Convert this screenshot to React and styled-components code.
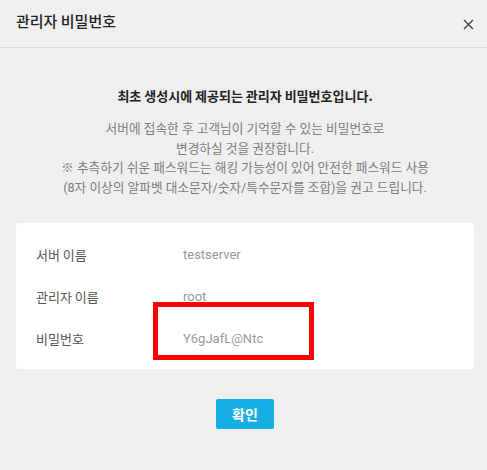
import React from 'react';
import styled, { createGlobalStyle } from 'styled-components';

const GlobalStyle = createGlobalStyle`
  html, body {
    margin: 0;
    padding: 0;
    background: #efefef;
    overflow: hidden;
  }
  body {
    font-family: Roboto, 'Noto Sans CJK KR', sans-serif;
  }
`;

const rows = [
  { label: '서버 이름', value: 'testserver' },
  { label: '관리자 이름', value: 'root' },
  { label: '비밀번호', value: 'Y6gJafL@Ntc', marked: true },
];

const App = () => {
  return (
    <>
      <GlobalStyle />
      <Dialog>
        <Header>
          <Title>관리자 비밀번호</Title>
          <CloseButton aria-label="close">
            <svg width="11" height="11" viewBox="0 0 11 11">
              <path d="M1 1L10 10M10 1L1 10" stroke="#444" strokeWidth="1.4" fill="none" />
            </svg>
          </CloseButton>
        </Header>

        <Body>
          <Lead>최초 생성시에 제공되는 관리자 비밀번호입니다.</Lead>
          <Notice>
            서버에 접속한 후 고객님이 기억할 수 있는 비밀번호로
            <br />
            변경하실 것을 권장합니다.
            <br />
            ※ 추측하기 쉬운 패스워드는 해킹 가능성이 있어 안전한 패스워드 사용
            <br />
            (8자 이상의 알파벳 대소문자/숫자/특수문자를 조합)을 권고 드립니다.
          </Notice>

          <InfoCard>
            {rows.map((row) => (
              <Row key={row.label}>
                <Label>{row.label}</Label>
                <Value>
                  {row.value}
                  {row.marked && <Highlight />}
                </Value>
              </Row>
            ))}
          </InfoCard>

          <ConfirmButton>확인</ConfirmButton>
        </Body>
      </Dialog>
    </>
  );
};

export default App;

const Dialog = styled.div`
  width: 490px;
  height: 470px;
  background: #efefef;
`;

const Header = styled.header`
  height: 48px;
  box-sizing: border-box;
  border-bottom: 1px solid #dcdcdc;
  display: flex;
  justify-content: space-between;
  align-items: flex-start;
  padding: 11px 16px 0 16px;
`;

const Title = styled.h1`
  margin: 0;
  font-family: 'Noto Sans CJK KR', sans-serif;
  font-size: 15px;
  font-weight: 500;
  line-height: 20px;
  color: #222;
`;

const CloseButton = styled.button`
  border: 0;
  background: none;
  padding: 0;
  margin-top: 8px;
  width: 11px;
  height: 11px;
  display: flex;
  cursor: pointer;
`;

const Body = styled.section`
  display: flex;
  flex-direction: column;
  align-items: center;
  padding: 38px 16px 0 16px;
`;

const Lead = styled.p`
  margin: 0;
  font-family: 'Noto Sans CJK KR', sans-serif;
  font-size: 13px;
  font-weight: 700;
  line-height: 20px;
  color: #222;
  text-align: center;
`;

const Notice = styled.p`
  margin: 13px 0 0 0;
  font-family: Roboto, 'Noto Sans CJK KR', sans-serif;
  font-size: 12.7px;
  font-weight: 400;
  line-height: 19.5px;
  color: #7d7d7d;
  text-align: center;
  white-space: nowrap;
`;

const InfoCard = styled.div`
  align-self: stretch;
  margin-top: 26px;
  background: #fff;
  border-radius: 4px;
  padding: 10px 20px;
  display: flex;
  flex-direction: column;
`;

const Row = styled.div`
  height: 42px;
  display: flex;
  align-items: center;
`;

const Label = styled.span`
  width: 147px;
  font-family: 'Noto Sans CJK KR', sans-serif;
  font-size: 13px;
  color: #555;
`;

const Value = styled.span`
  position: relative;
  font-family: Roboto, sans-serif;
  font-size: 13px;
  color: #999;
`;

const Highlight = styled.span`
  position: absolute;
  left: -30px;
  top: -29px;
  width: 161px;
  height: 58px;
  box-sizing: border-box;
  border: 5px solid #ff0000;
`;

const ConfirmButton = styled.button`
  margin-top: 30px;
  width: 58px;
  height: 30px;
  border: 0;
  border-radius: 2px;
  background: #17aee6;
  color: #fff;
  font-family: 'Noto Sans CJK KR', sans-serif;
  font-size: 14px;
  font-weight: 700;
  padding: 0;
  cursor: pointer;
`;
